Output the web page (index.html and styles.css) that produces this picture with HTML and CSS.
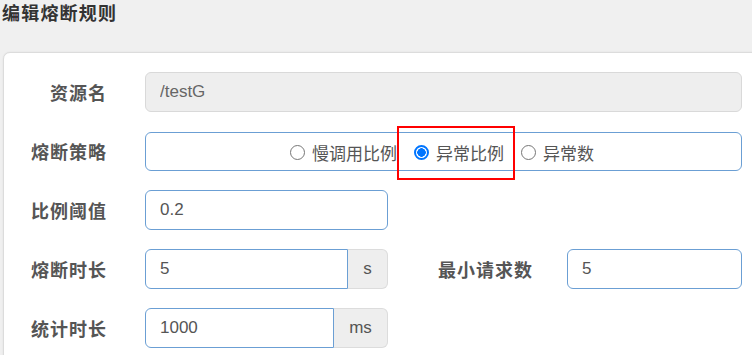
FILE: index.html
```html
<!DOCTYPE html>
<html lang="zh-CN">
<head>
<meta charset="utf-8">
<title>编辑熔断规则</title>
<link rel="stylesheet" href="styles.css">
</head>
<body>
<div class="page">
  <h4 class="title">编辑熔断规则</h4>
  <div class="card">
    <form class="form">
      <div class="row">
        <label class="lbl">资源名</label>
        <div class="field full">
          <input class="ctl ctl-disabled" type="text" value="/testG" disabled>
        </div>
      </div>
      <div class="row">
        <label class="lbl">熔断策略</label>
        <div class="field full radios">
          <label class="opt"><input type="radio" name="grade"><span>慢调用比例</span></label>
          <label class="opt"><input type="radio" name="grade" checked><span>异常比例</span></label>
          <label class="opt"><input type="radio" name="grade"><span>异常数</span></label>
        </div>
      </div>
      <div class="row">
        <label class="lbl">比例阈值</label>
        <div class="field half">
          <input class="ctl ctl-active" type="text" value="0.2">
        </div>
      </div>
      <div class="row">
        <label class="lbl">熔断时长</label>
        <div class="field half group">
          <input class="ctl ctl-active grp-input" type="text" value="5">
          <span class="addon addon-s">s</span>
        </div>
        <label class="lbl lbl-right">最小请求数</label>
        <div class="field small">
          <input class="ctl ctl-active" type="text" value="5">
        </div>
      </div>
      <div class="row">
        <label class="lbl">统计时长</label>
        <div class="field half group">
          <input class="ctl ctl-active grp-input" type="text" value="1000">
          <span class="addon addon-ms">ms</span>
        </div>
      </div>
    </form>
    <div class="highlight"></div>
  </div>
</div>
</body>
</html>
```

FILE: styles.css
```css
* { box-sizing: border-box; }

html, body {
  margin: 0;
  padding: 0;
  background: #f0f0f0;
  overflow: hidden;
  width: 752px;
  height: 355px;
}

body {
  font-family: "Liberation Sans", "Noto Sans CJK SC", sans-serif;
  color: #555;
}

.title {
  margin: 0;
  padding: 2px 0 0 2px;
  font-size: 18px;
  letter-spacing: 1.2px;
  line-height: 24px;
  font-weight: bold;
  color: #333;
  height: 52px;
}

.card {
  position: relative;
  margin-left: 3px;
  width: 820px;
  height: 340px;
  background: #fff;
  border: 1px solid #dcdcdc;
  border-radius: 7px;
  box-shadow: 0 0 2px rgba(0, 0, 0, 0.08);
}

.form {
  display: flex;
  flex-direction: column;
  gap: 19px;
  padding-top: 19px;
}

.row {
  display: flex;
  align-items: center;
  height: 40px;
}

.lbl {
  width: 141px;
  padding-right: 38px;
  padding-top: 4px;
  text-align: right;
  font-size: 18px;
  letter-spacing: 1px;
  font-weight: bold;
  color: #555;
  line-height: 36px;
}

.lbl-right {
  width: 179px;
  padding-right: 34px;
}

.field {
  height: 100%;
  display: flex;
}

.full { width: 597px; }
.half { width: 243px; }
.small { width: 175px; }

.ctl {
  width: 100%;
  height: 100%;
  border: 1px solid #6b9fd4;
  border-radius: 6px;
  padding: 0 14px;
  font-family: "Liberation Sans", "Noto Sans CJK SC", sans-serif;
  font-size: 17px;
  color: #555;
  background: #fff;
  outline: none;
}

.ctl-disabled {
  background: #eee;
  border-color: #d9d9d9;
  color: #666;
  -webkit-text-fill-color: #666;
  opacity: 1;
}

.group .grp-input {
  flex: 1;
  min-width: 0;
  border-radius: 6px 0 0 6px;
}

.addon {
  display: flex;
  align-items: center;
  justify-content: center;
  background: #eee;
  border: 1px solid #dcdcdc;
  border-left: none;
  border-radius: 0 6px 6px 0;
  font-size: 17px;
  color: #555;
}

.addon-s { width: 40px; }
.addon-ms { width: 54px; }

.radios {
  border: 1px solid #6b9fd4;
  border-radius: 6px;
  height: 39px;
  align-items: center;
  justify-content: center;
  gap: 17px;
  padding-top: 2px;
  padding-right: 3px;
}

.opt {
  display: flex;
  align-items: center;
  font-size: 17px;
  color: #555;
}

.opt input {
  appearance: none;
  -webkit-appearance: none;
  width: 15px;
  height: 15px;
  margin: 0 7px 0 0;
  border: 1px solid #767676;
  border-radius: 50%;
  background: #fff;
  flex: none;
}

.opt input:checked {
  border: 2px solid #0075ff;
  background: radial-gradient(circle, #0075ff 0 4px, #fff 4.5px);
}

.highlight {
  position: absolute;
  left: 393px;
  top: 73px;
  width: 118px;
  height: 54px;
  border: 2px solid #f00;
  pointer-events: none;
}
```
